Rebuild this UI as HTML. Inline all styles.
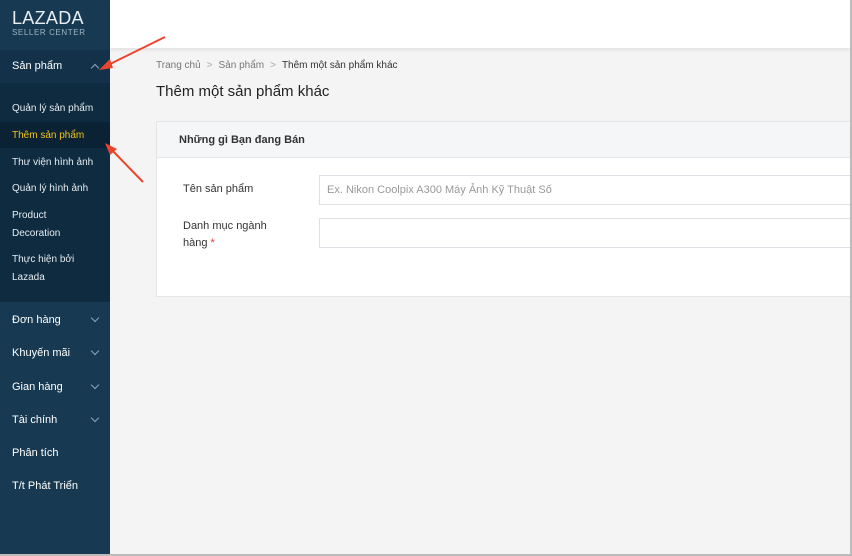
<!DOCTYPE html>
<html><head><meta charset="utf-8"><style>
*{margin:0;padding:0;box-sizing:border-box}
body{width:852px;height:556px;overflow:hidden;background:#f4f4f4;font-family:"Liberation Sans",sans-serif;position:relative}
#sb{position:absolute;left:0;top:0;width:110px;height:556px;background:#173a52}
.logo{position:absolute;left:12px;top:8px;color:#e8eef2}
.logo .a{font-size:18px;letter-spacing:.3px;font-weight:300}
.logo .b{font-size:8px;letter-spacing:.6px;color:#9fb3c2;margin-top:-1px}
.hd{position:absolute;left:0;top:50px;width:110px;height:33px;background:#13324a;color:#fff;font-size:11px;padding:10px 12px}
.sub{position:absolute;left:0;top:83px;width:110px;height:219px;background:#0f2b40}
.it{position:absolute;left:12px;color:#e6ecf0;font-size:10px;line-height:18px}
.act{position:absolute;left:0;top:122px;width:110px;height:26px;background:#0b2235}
.mi{position:absolute;left:12px;color:#fff;font-size:11px}
.chev{position:absolute;left:92px;width:6px;height:6px;border-right:1px solid #8ea5b5;border-bottom:1px solid #8ea5b5;transform:rotate(45deg)}
#top{position:absolute;left:110px;top:0;width:740px;height:48px;background:#fff;box-shadow:0 2px 4px rgba(0,0,0,.08)}
.bc{position:absolute;left:156px;top:60px;font-size:10px;color:#777}
.bc b{font-weight:normal;color:#333}
.bc i{font-style:normal;color:#aaa;margin:0 6px}
h1{position:absolute;left:156px;top:83px;font-size:15px;font-weight:normal;color:#222}
.card{position:absolute;left:156px;top:121px;width:696px;height:176px;background:#fff;border:1px solid #e3e5e8}
.ch{height:36px;background:#f5f6f8;border-bottom:1px solid #e5e7ea;padding:12px 22px;font-size:11px;font-weight:bold;color:#333}
.lb{position:absolute;left:26px;font-size:11px;color:#333;line-height:17px}
.in{position:absolute;left:162px;width:540px;height:30px;border:1px solid #dcdfe3;background:#fff;font-size:11px;color:#999;padding:8px 7px}
</style></head><body>
<div id="sb">
<div class="logo"><div class="a">LAZADA</div><div class="b">SELLER CENTER</div></div>
<div class="hd">Sản phẩm<span class="chev" style="top:15px;transform:rotate(225deg)"></span></div>
<div class="sub"></div>
<div class="act"></div>
<div class="it" style="top:100px">Quản lý sản phẩm</div>
<div class="it" style="top:127px;color:#f0c419">Thêm sản phẩm</div>
<div class="it" style="top:154px">Thư viện hình ảnh</div>
<div class="it" style="top:180px">Quản lý hình ảnh</div>
<div class="it" style="top:207px">Product<br>Decoration</div>
<div class="it" style="top:251px">Thực hiện bởi<br>Lazada</div>
<div class="mi" style="top:314px">Đơn hàng</div><span class="chev" style="top:315px"></span>
<div class="mi" style="top:347px">Khuyến mãi</div><span class="chev" style="top:348px"></span>
<div class="mi" style="top:381px">Gian hàng</div><span class="chev" style="top:382px"></span>
<div class="mi" style="top:414px">Tài chính</div><span class="chev" style="top:415px"></span>
<div class="mi" style="top:447px">Phân tích</div>
<div class="mi" style="top:480px">T/t Phát Triển</div>
</div>
<div id="top"></div>
<div class="bc">Trang chủ<i>&gt;</i>Sản phẩm<i>&gt;</i><b>Thêm một sản phẩm khác</b></div>
<h1>Thêm một sản phẩm khác</h1>
<div class="card">
<div class="ch">Những gì Bạn đang Bán</div>
<div class="lb" style="top:59px">Tên sản phẩm</div>
<div class="in" style="top:53px">Ex. Nikon Coolpix A300 Máy Ảnh Kỹ Thuật Số</div>
<div class="lb" style="top:96px">Danh mục ngành<br>hàng <span style="color:#e33">*</span></div>
<div class="in" style="top:96px"></div>
</div>
<div style="position:absolute;left:850px;top:0;width:2px;height:556px;background:#bbb"></div>
<div style="position:absolute;left:0;top:554px;width:852px;height:2px;background:#bbb"></div>
<svg style="position:absolute;left:0;top:0" width="852" height="556">
<g stroke="#e8452c" stroke-width="2" fill="#e8452c">
<line x1="165" y1="37" x2="106" y2="66"/>
<polygon points="99,70 110,59 113,68" stroke="none"/>
<line x1="143" y1="182" x2="110" y2="148"/>
<polygon points="105,143 117,149 110,155" stroke="none"/>
</g></svg>
</body></html>
